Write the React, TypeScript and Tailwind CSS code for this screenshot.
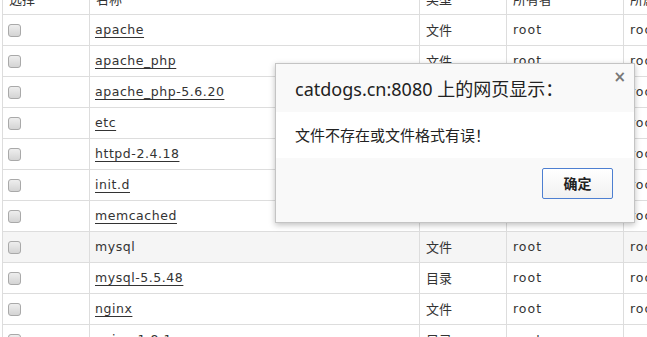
import React from "react";

type Row = { name: string; type: string; link: boolean; hover?: boolean };

const rows: Row[] = [
  { name: "apache", type: "文件", link: true },
  { name: "apache_php", type: "文件", link: true },
  { name: "apache_php-5.6.20", type: "目录", link: true },
  { name: "etc", type: "目录", link: true },
  { name: "httpd-2.4.18", type: "目录", link: true },
  { name: "init.d", type: "目录", link: true },
  { name: "memcached", type: "目录", link: true },
  { name: "mysql", type: "文件", link: false, hover: true },
  { name: "mysql-5.5.48", type: "目录", link: true },
  { name: "nginx", type: "文件", link: true },
  { name: "nginx-1.8.1", type: "目录", link: true },
];

const latin = { fontFamily: '"DejaVu Sans", "Noto Sans CJK SC", sans-serif' };
const cjk = { fontFamily: '"Noto Sans CJK SC", "DejaVu Sans", sans-serif' };

function Checkbox() {
  return (
    <span className="inline-block w-[13px] h-[13px] rounded-[3px] border border-[#a9a9a9] bg-gradient-to-b from-[#eeeeee] to-[#d4d4d4]" />
  );
}

export default function App() {
  return (
    <div className="relative w-[647px] h-[337px] overflow-hidden bg-white text-[#333]">
      <div className="mt-[-18px] ml-[2px]">
        <table className="border-collapse w-[700px] table-fixed text-[12px]">
          <colgroup>
            <col className="w-[87px]" />
            <col className="w-[330px]" />
            <col className="w-[87px]" />
            <col className="w-[117px]" />
            <col className="w-[79px]" />
          </colgroup>
          <thead>
            <tr className="h-[31px]">
              {["选择", "名称", "类型", "所有者", "所属组"].map((h) => (
                <th key={h} style={cjk} className="border border-[#dddddd] px-[6px] text-left font-normal text-[13px] leading-[31px]">
                  {h}
                </th>
              ))}
            </tr>
          </thead>
          <tbody>
            {rows.map((r) => (
              <tr key={r.name} className={`h-[31px] ${r.hover ? "bg-[#f5f5f5]" : "bg-white"}`}>
                <td className="border border-[#dddddd] pl-[5px] pr-[6px] align-middle">
                  <div className="flex items-center h-[30px] pt-[1px]">
                    <Checkbox />
                  </div>
                </td>
                <td className="border border-[#dddddd] pl-[5px] pr-[6px] align-middle" style={latin}>
                  <span className={`tracking-[0.55px] text-[12.5px] ${r.link ? "underline underline-offset-[3px]" : ""}`}>
                    {r.name}
                  </span>
                </td>
                <td className="border border-[#dddddd] px-[6px] align-middle text-[13px]" style={cjk}>
                  {r.type}
                </td>
                <td className="border border-[#dddddd] px-[6px] align-middle" style={latin}>
                  <span className="tracking-[1px] text-[12.5px]">root</span>
                </td>
                <td className="border border-[#dddddd] px-[6px] align-middle" style={latin}>
                  <span className="tracking-[1px] text-[12.5px]">root</span>
                </td>
              </tr>
            ))}
          </tbody>
        </table>
      </div>

      <div className="absolute left-[275px] top-[63px] w-[360px] h-[160px] border border-[#c4c4c4] shadow-[0_2px_6px_rgba(0,0,0,0.25)] flex flex-col bg-white">
        <div className="relative h-[48px] bg-[#f9f9f9] pl-[19px] pt-[12px]">
          <div className="text-[18px] leading-[26px] text-[#222]" style={{ fontFamily: '"Noto Sans", "Noto Sans CJK SC", sans-serif' }}>
            catdogs.cn:8080 上的网页显示：
          </div>
          <span className="absolute right-[8px] top-[6px] text-[#777] text-[15px] font-bold leading-none" style={{ fontFamily: '"DejaVu Sans", sans-serif' }}>
            ×
          </span>
        </div>
        <div className="h-[46px] bg-white pl-[19px] flex items-center">
          <span className="text-[15px] text-[#222]" style={cjk}>
            文件不存在或文件格式有误！
          </span>
        </div>
        <div className="flex-1 bg-[#f9f9f9] flex justify-end items-start pt-[10px] pr-[21px]">
          <button
            className="w-[71px] h-[31px] rounded-[2px] border border-[#4d7fd1] bg-gradient-to-b from-[#ffffff] to-[#f1f1f1] text-[14px] font-bold text-[#222]"
            style={cjk}
          >
            确定
          </button>
        </div>
      </div>
    </div>
  );
}
